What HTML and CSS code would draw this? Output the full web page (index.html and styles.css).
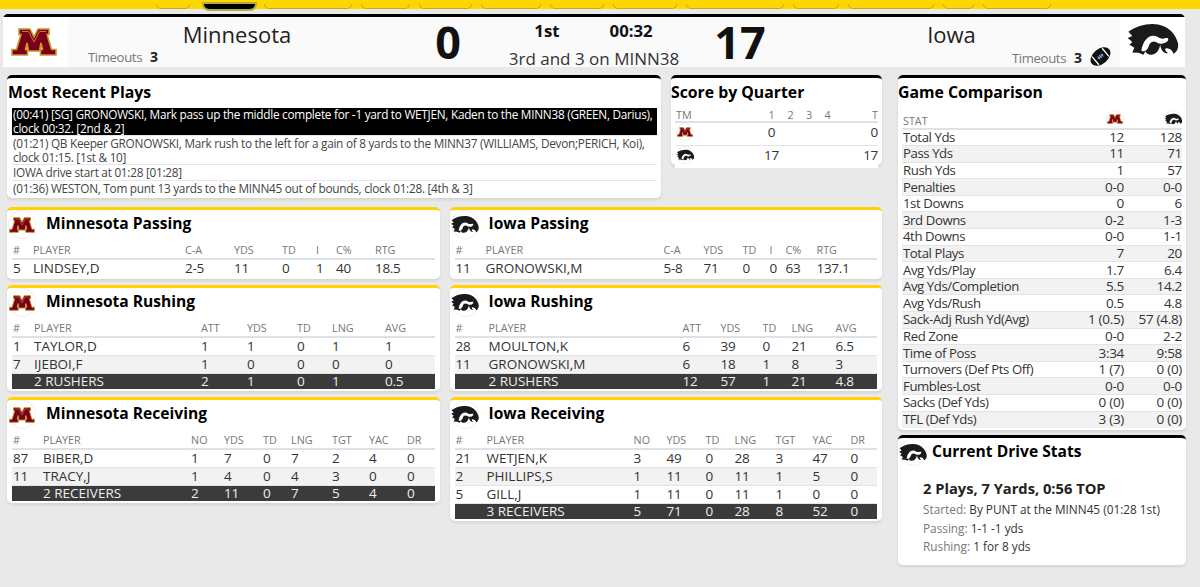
FILE: index.html
```html
<!DOCTYPE html>
<html lang="en">
<head>
<meta charset="utf-8">
<title>Minnesota at Iowa</title>
<link rel="stylesheet" href="styles.css">
</head>
<body>
<svg class="sprite" aria-hidden="true">
  <symbol id="mn" viewBox="0 0 46 28">
    <path d="M8 1H19L23 9L27 1H38V6.500H36L40.500 21.500H45V27H29.500V21.500H31.500L30 15L28.500 23H17.500L16 15L14.500 21.500H16.500V27H1V21.500H5.500L10 6.500H8Z" fill="#7a0019" stroke="#c9962c" stroke-width="1.600"/>
    <path d="M11 3.500H17.500L23 14L28.500 3.500H35" fill="none" stroke="#e0b040" stroke-width=".7"/>
  </symbol>
  <symbol id="hawk" viewBox="140 40 155 100">
    <path d="M147 68C170 50 205 42 232 47C260 52 282 72 289 100C292 114 286 126 276 131C274 121 266 115 254 115C251 122 256 126 262 129C250 131 240 122 238 104C236 120 228 132 212 134C204 134 198 130 196 124L190 134L176 128L158 127L164 114L150 105L158 97L145 86L158 80Z" fill="#1a1a1a"/>
    <path d="M184 122C188 96 202 78 220 79C232 80 238 92 254 86C262 84 264 90 258 96C248 104 236 104 226 97C214 92 208 100 205 110C201 122 192 126 184 122Z" fill="#fff"/>
  </symbol>
  <symbol id="ball" viewBox="0 0 24 24">
    <g transform="rotate(-40 12 12)">
      <ellipse cx="12" cy="12" rx="13" ry="8.500" fill="#111"/>
      <path d="M4.500 6V18M19.500 6V18" stroke="#fff" stroke-width="1.500"/>
      <path d="M8 12H16M9.500 10V14M12 10V14M14.500 10V14" stroke="#9fc0e8" stroke-width="1.100"/>
    </g>
  </symbol>
</svg>

<nav class="topnav">
  <span class="nb nb1"></span><span class="nb nb-active"></span><span class="nb nb3"></span><span class="nb nb4"></span><span class="nb nb5"></span><span class="nb nb6"></span><span class="nb nb7"></span><span class="nb nb8"></span><span class="nb nb9"></span><span class="nb nb10"></span><span class="nb nb11"></span><span class="nb nb12"></span><span class="nb nb13"></span>
</nav>

<header class="scorebar">
  <div class="sb-logo"><svg class="mn-big"><use href="#mn"/></svg></div>
  <div class="team team-l">
    <div class="team-name">Minnesota</div>
    <div class="timeouts">Timeouts <b>3</b></div>
  </div>
  <div class="score score-l">0</div>
  <div class="clock">
    <div class="clock-top"><b>1st</b><b>00:32</b></div>
    <div class="down">3rd and 3 on MINN38</div>
  </div>
  <div class="score score-r">17</div>
  <div class="team team-r">
    <div class="team-name">Iowa</div>
    <div class="timeouts">Timeouts <b>3</b><svg class="ball"><use href="#ball"/></svg></div>
  </div>
  <div class="sb-logo"><svg class="hawk-big"><use href="#hawk"/></svg></div>
</header>

<main class="layout">
  <div class="left">
    <div class="top-row">
      <section class="card plays">
        <h2>Most Recent Plays</h2>
        <ul class="play-list">
          <li class="current">(00:41) [SG] GRONOWSKI, Mark pass up the middle complete for -1 yard to WETJEN, Kaden to the MINN38 (GREEN, Darius), clock 00:32. [2nd &amp; 2]</li>
          <li>(01:21) QB Keeper GRONOWSKI, Mark rush to the left for a gain of 8 yards to the MINN37 (WILLIAMS, Devon;PERICH, Koi), clock 01:15. [1st &amp; 10]</li>
          <li>IOWA drive start at 01:28 [01:28]</li>
          <li>(01:36) WESTON, Tom punt 13 yards to the MINN45 out of bounds, clock 01:28. [4th &amp; 3]</li>
        </ul>
      </section>
      <section class="card quarters">
        <h2>Score by Quarter</h2>
        <table class="tbl t-q">
          <colgroup><col><col><col><col><col><col></colgroup>
          <thead><tr><th>TM</th><th>1</th><th>2</th><th>3</th><th>4</th><th>T</th></tr></thead>
          <tbody>
            <tr><td><span class="mini"><svg class="mini-mn"><use href="#mn"/></svg></span></td><td>0</td><td></td><td></td><td></td><td>0</td></tr>
            <tr><td><span class="mini"><svg class="mini-hk"><use href="#hawk"/></svg></span></td><td>17</td><td></td><td></td><td></td><td>17</td></tr>
          </tbody>
        </table>
      </section>
    </div>
    <div class="stats">
      <div class="stat-col">
        <section class="card gold">
          <h3><span class="badge"><svg class="bd-mn"><use href="#mn"/></svg></span>Minnesota Passing</h3>
          <table class="tbl t-mp"><colgroup><col><col><col><col><col><col><col><col></colgroup>
            <thead><tr><th>#</th><th>PLAYER</th><th>C-A</th><th>YDS</th><th>TD</th><th>I</th><th>C%</th><th>RTG</th></tr></thead>
            <tbody><tr><td>5</td><td>LINDSEY,D</td><td>2-5</td><td>11</td><td>0</td><td>1</td><td>40</td><td>18.5</td></tr></tbody>
          </table>
        </section>
        <section class="card gold">
          <h3><span class="badge"><svg class="bd-mn"><use href="#mn"/></svg></span>Minnesota Rushing</h3>
          <table class="tbl t-mr"><colgroup><col><col><col><col><col><col><col></colgroup>
            <thead><tr><th>#</th><th>PLAYER</th><th>ATT</th><th>YDS</th><th>TD</th><th>LNG</th><th>AVG</th></tr></thead>
            <tbody>
              <tr><td>1</td><td>TAYLOR,D</td><td>1</td><td>1</td><td>0</td><td>1</td><td>1</td></tr>
              <tr><td>7</td><td>IJEBOI,F</td><td>1</td><td>0</td><td>0</td><td>0</td><td>0</td></tr>
              <tr class="total"><td></td><td>2 RUSHERS</td><td>2</td><td>1</td><td>0</td><td>1</td><td>0.5</td></tr>
            </tbody>
          </table>
        </section>
        <section class="card gold">
          <h3><span class="badge"><svg class="bd-mn"><use href="#mn"/></svg></span>Minnesota Receiving</h3>
          <table class="tbl t-mc"><colgroup><col><col><col><col><col><col><col><col><col></colgroup>
            <thead><tr><th>#</th><th>PLAYER</th><th>NO</th><th>YDS</th><th>TD</th><th>LNG</th><th>TGT</th><th>YAC</th><th>DR</th></tr></thead>
            <tbody>
              <tr><td>87</td><td>BIBER,D</td><td>1</td><td>7</td><td>0</td><td>7</td><td>2</td><td>4</td><td>0</td></tr>
              <tr><td>11</td><td>TRACY,J</td><td>1</td><td>4</td><td>0</td><td>4</td><td>3</td><td>0</td><td>0</td></tr>
              <tr class="total"><td></td><td>2 RECEIVERS</td><td>2</td><td>11</td><td>0</td><td>7</td><td>5</td><td>4</td><td>0</td></tr>
            </tbody>
          </table>
        </section>
      </div>
      <div class="stat-col">
        <section class="card gold">
          <h3><span class="badge"><svg class="bd-hk"><use href="#hawk"/></svg></span>Iowa Passing</h3>
          <table class="tbl t-ip"><colgroup><col><col><col><col><col><col><col><col></colgroup>
            <thead><tr><th>#</th><th>PLAYER</th><th>C-A</th><th>YDS</th><th>TD</th><th>I</th><th>C%</th><th>RTG</th></tr></thead>
            <tbody><tr><td>11</td><td>GRONOWSKI,M</td><td>5-8</td><td>71</td><td>0</td><td>0</td><td>63</td><td>137.1</td></tr></tbody>
          </table>
        </section>
        <section class="card gold">
          <h3><span class="badge"><svg class="bd-hk"><use href="#hawk"/></svg></span>Iowa Rushing</h3>
          <table class="tbl t-ir"><colgroup><col><col><col><col><col><col><col></colgroup>
            <thead><tr><th>#</th><th>PLAYER</th><th>ATT</th><th>YDS</th><th>TD</th><th>LNG</th><th>AVG</th></tr></thead>
            <tbody>
              <tr><td>28</td><td>MOULTON,K</td><td>6</td><td>39</td><td>0</td><td>21</td><td>6.5</td></tr>
              <tr><td>11</td><td>GRONOWSKI,M</td><td>6</td><td>18</td><td>1</td><td>8</td><td>3</td></tr>
              <tr class="total"><td></td><td>2 RUSHERS</td><td>12</td><td>57</td><td>1</td><td>21</td><td>4.8</td></tr>
            </tbody>
          </table>
        </section>
        <section class="card gold">
          <h3><span class="badge"><svg class="bd-hk"><use href="#hawk"/></svg></span>Iowa Receiving</h3>
          <table class="tbl t-ic"><colgroup><col><col><col><col><col><col><col><col><col></colgroup>
            <thead><tr><th>#</th><th>PLAYER</th><th>NO</th><th>YDS</th><th>TD</th><th>LNG</th><th>TGT</th><th>YAC</th><th>DR</th></tr></thead>
            <tbody>
              <tr><td>21</td><td>WETJEN,K</td><td>3</td><td>49</td><td>0</td><td>28</td><td>3</td><td>47</td><td>0</td></tr>
              <tr><td>2</td><td>PHILLIPS,S</td><td>1</td><td>11</td><td>0</td><td>11</td><td>1</td><td>5</td><td>0</td></tr>
              <tr><td>5</td><td>GILL,J</td><td>1</td><td>11</td><td>0</td><td>11</td><td>1</td><td>0</td><td>0</td></tr>
              <tr class="total"><td></td><td>3 RECEIVERS</td><td>5</td><td>71</td><td>0</td><td>28</td><td>8</td><td>52</td><td>0</td></tr>
            </tbody>
          </table>
        </section>
      </div>
    </div>
  </div>

  <aside class="right">
    <section class="card compare">
      <h2>Game Comparison</h2>
      <table class="tbl t-gc"><colgroup><col><col><col></colgroup>
        <thead><tr><th>STAT</th><th><span class="mini"><svg class="mini-mn"><use href="#mn"/></svg></span></th><th><span class="mini"><svg class="mini-hk"><use href="#hawk"/></svg></span></th></tr></thead>
        <tbody>
          <tr><td>Total Yds</td><td>12</td><td>128</td></tr>
          <tr><td>Pass Yds</td><td>11</td><td>71</td></tr>
          <tr><td>Rush Yds</td><td>1</td><td>57</td></tr>
          <tr><td>Penalties</td><td>0-0</td><td>0-0</td></tr>
          <tr><td>1st Downs</td><td>0</td><td>6</td></tr>
          <tr><td>3rd Downs</td><td>0-2</td><td>1-3</td></tr>
          <tr><td>4th Downs</td><td>0-0</td><td>1-1</td></tr>
          <tr><td>Total Plays</td><td>7</td><td>20</td></tr>
          <tr><td>Avg Yds/Play</td><td>1.7</td><td>6.4</td></tr>
          <tr><td>Avg Yds/Completion</td><td>5.5</td><td>14.2</td></tr>
          <tr><td>Avg Yds/Rush</td><td>0.5</td><td>4.8</td></tr>
          <tr><td>Sack-Adj Rush Yd(Avg)</td><td>1 (0.5)</td><td>57 (4.8)</td></tr>
          <tr><td>Red Zone</td><td>0-0</td><td>2-2</td></tr>
          <tr><td>Time of Poss</td><td>3:34</td><td>9:58</td></tr>
          <tr><td>Turnovers (Def Pts Off)</td><td>1 (7)</td><td>0 (0)</td></tr>
          <tr><td>Fumbles-Lost</td><td>0-0</td><td>0-0</td></tr>
          <tr><td>Sacks (Def Yds)</td><td>0 (0)</td><td>0 (0)</td></tr>
          <tr><td>TFL (Def Yds)</td><td>3 (3)</td><td>0 (0)</td></tr>
        </tbody>
      </table>
    </section>
    <section class="card drive">
      <h3 class="drive-title"><span class="badge"><svg class="bd-hk"><use href="#hawk"/></svg></span>Current Drive Stats</h3>
      <div class="drive-body">
        <div class="drive-sum">2 Plays, 7 Yards, 0:56 TOP</div>
        <div class="drive-line first"><span>Started:</span> By PUNT at the MINN45 (01:28 1st)</div>
        <div class="drive-line"><span>Passing:</span> 1-1 -1 yds</div>
        <div class="drive-line"><span>Rushing:</span> 1 for 8 yds</div>
      </div>
    </section>
  </aside>
</main>
</body>
</html>
```

FILE: styles.css
```css
* { box-sizing: border-box; }
html, body { margin: 0; padding: 0; }
body {
  background: #e9e9e9;
  color: #2e2e2e;
  font-family: "Open Sans", "Liberation Sans", sans-serif;
  font-size: 13px;
  height: 587px;
  overflow: hidden;
}
.sprite { position: absolute; width: 0; height: 0; }

/* top nav */
.topnav { height: 9px; background: #ffd700; display: flex; align-items: flex-end; }
.nb { display: block; height: 5px; border: 1px solid #c9aa10; border-top: 0; border-radius: 0 0 5px 5px; margin-right: 9px; }
.nb1 { margin-left: 156px; width: 34px; margin-right: 14px; }
.nb-active { width: 51px; background: #000; box-shadow: 0 0 0 2px #b8ad3a; border: 0; margin-right: 9px; }
.nb3 { width: 88px; }
.nb4 { width: 49px; }
.nb5 { width: 53px; }
.nb6 { width: 60px; }
.nb7 { width: 54px; }
.nb8 { width: 64px; }
.nb9 { width: 98px; }
.nb10 { width: 46px; }
.nb11 { width: 86px; }
.nb12 { width: 31px; }
.nb13 { width: 68px; }

/* score bar */
.scorebar {
  margin: 5px 0 0 3px;
  width: 1182px;
  height: 53px;
  display: flex;
  background: #fafafa;
  border-top: 3px solid #000;
  border-radius: 5px 5px 0 0;
}
.sb-logo { width: 65px; background: #fff; display: flex; align-items: center; justify-content: center; }
.mn-big { width: 46px; height: 28px; margin-left: -3px; }
.hawk-big { width: 54px; height: 35px; margin-top: -5px; flex: none; }
.team { width: 352px; }
.team-name { font-size: 22px; line-height: 30px; text-align: center; margin-top: 2px; color: #222; }
.team-l .team-name { margin-left: -14px; }
.team-r .team-name { margin-left: 14px; }
.timeouts { font-size: 13.200px; letter-spacing: -.4px; color: #777; line-height: 16px; display: flex; align-items: center; }
.timeouts b { color: #222; font-size: 14px; margin-left: 8px; letter-spacing: 0; }
.team-l .timeouts { padding-left: 20px; }
.team-r .timeouts { padding-left: 243px; }
.ball { width: 21px; height: 21px; margin: -3px 0 0 8px; flex: none; }
.team-r { width: 351px; margin-left: auto; }
.score { width: 58px; font-size: 45px; font-weight: 700; line-height: 50px; text-align: center; color: #111; }
.score-l { margin-left: -1px; }
.clock { flex: 1; text-align: center; }
.clock-top { display: flex; justify-content: center; gap: 50px; font-size: 16.800px; line-height: 22px; margin-top: 3px; color: #111; margin-left: -1px; }
.down { font-size: 17px; line-height: 24px; margin-top: 5px; color: #333; }

/* layout */
.layout { display: flex; gap: 16px; margin: 8px 0 0 7px; align-items: flex-start; }
.left { width: 875px; }
.right { width: 288px; display: flex; flex-direction: column; gap: 5px; }
.top-row { display: flex; gap: 10px; align-items: flex-start; }
.stats { display: flex; gap: 10px; margin-top: 9px; }
.stat-col { width: 432.500px; display: flex; flex-direction: column; gap: 6px; }

.card {
  background: #fff;
  border-top: 3px solid #000;
  border-radius: 5px;
  box-shadow: 0 2px 3px rgba(0, 0, 0, .09);
}
.gold { border-top-color: #ffd200; padding: 0 5px 2px; }

h2, h3 { margin: 0; color: #000; font-weight: 700; }
h2 { height: 30px; line-height: 28px; padding-left: 1px; font-size: 15.800px; }
h3 { height: 29px; line-height: 27px; display: flex; align-items: flex-start; margin-left: -4px; font-size: 15.600px; }

.badge { width: 28px; height: 29px; border: 1px solid #f0f0f0; border-radius: 50%; margin-right: 10px; display: flex; align-items: center; justify-content: center; flex: none; }
.bd-mn { width: 26px; height: 16px; flex: none; }
.bd-hk { width: 30px; height: 19px; flex: none; }
.mini { width: 18px; height: 18px; border-radius: 50%; border: 1px solid #f0f0f0; display: inline-flex; align-items: center; justify-content: center; vertical-align: middle; }
.mini-mn { width: 16px; height: 10px; flex: none; }
.mini-hk { width: 19px; height: 12px; flex: none; }

/* tables */
.tbl { width: 100%; border-collapse: collapse; table-layout: fixed; }
.tbl th { font-size: 10.800px; font-weight: 400; color: #777; text-align: left; padding: 0 0 0 1px; height: 20px; vertical-align: bottom; line-height: 16px; border-bottom: 2px solid #dee2e6; }
.tbl td { font-size: 13.500px; letter-spacing: -.3px; padding: 0 0 0 1px; height: 18px; line-height: 15px; border-bottom: 1px solid #e4e4e4; white-space: nowrap; color: #333; }
.tbl td:nth-child(2) { letter-spacing: 0; }
.tbl tbody tr:nth-child(even) td { background: #f2f2f2; }
.tbl tbody tr.total td { background: #3b3b3b; color: #eee; border-bottom: 0; height: 16px; }
.tbl tbody tr:last-child td { border-bottom: 0; }

.t-mp col:nth-child(1) { width: 20px; } .t-mp col:nth-child(2) { width: 152px; } .t-mp col:nth-child(3) { width: 49px; } .t-mp col:nth-child(4) { width: 48px; } .t-mp col:nth-child(5) { width: 34px; } .t-mp col:nth-child(6) { width: 20px; } .t-mp col:nth-child(7) { width: 39px; }
.t-ip col:nth-child(1) { width: 30px; } .t-ip col:nth-child(2) { width: 178px; } .t-ip col:nth-child(3) { width: 40px; } .t-ip col:nth-child(4) { width: 39px; } .t-ip col:nth-child(5) { width: 27px; } .t-ip col:nth-child(6) { width: 16px; } .t-ip col:nth-child(7) { width: 31px; }
.t-mr col:nth-child(1) { width: 21px; } .t-mr col:nth-child(2) { width: 167px; } .t-mr col:nth-child(3) { width: 46px; } .t-mr col:nth-child(4) { width: 50px; } .t-mr col:nth-child(5) { width: 35px; } .t-mr col:nth-child(6) { width: 53px; }
.t-ir col:nth-child(1) { width: 33px; } .t-ir col:nth-child(2) { width: 194px; } .t-ir col:nth-child(3) { width: 38px; } .t-ir col:nth-child(4) { width: 42px; } .t-ir col:nth-child(5) { width: 29px; } .t-ir col:nth-child(6) { width: 44px; }
.t-mc col:nth-child(1) { width: 30px; } .t-mc col:nth-child(2) { width: 148px; } .t-mc col:nth-child(3) { width: 33px; } .t-mc col:nth-child(4) { width: 39px; } .t-mc col:nth-child(5) { width: 28px; } .t-mc col:nth-child(6) { width: 41px; } .t-mc col:nth-child(7) { width: 37px; } .t-mc col:nth-child(8) { width: 38px; }
.t-ic col:nth-child(1) { width: 31px; } .t-ic col:nth-child(2) { width: 147px; } .t-ic col:nth-child(3) { width: 33px; } .t-ic col:nth-child(4) { width: 39px; } .t-ic col:nth-child(5) { width: 29px; } .t-ic col:nth-child(6) { width: 41px; } .t-ic col:nth-child(7) { width: 37px; } .t-ic col:nth-child(8) { width: 38px; }

/* plays */
.plays { width: 654px; height: 123px; }
.play-list { list-style: none; margin: 0 4px 0 5px; padding: 0; }
.play-list li { font-size: 11.800px; letter-spacing: -.27px; line-height: 13.500px; color: #444; padding: 0 0 0 1px; border-bottom: 1px solid #e3e6ee; margin-bottom: 1px; }
.play-list li.current { background: #000; color: #fff; }
.play-list li:last-child { border-bottom: 0; }

/* quarters */
.quarters { width: 211px; height: 90px; padding: 0 4px; }
.quarters h2, .compare h2 { margin-left: -4px; padding-left: 0; }
.t-q th { height: 14px; line-height: 13px; vertical-align: top; }
.t-q th:nth-child(n+2), .t-q td:nth-child(n+2) { text-align: center; padding: 0; }
.t-q th:last-child, .t-q td:last-child { text-align: right; }
.tbl.t-q td { height: 22px; padding-bottom: 4px; letter-spacing: -.3px; }
.t-q tbody tr:nth-child(even) td { background: #fff; }
.t-q col:nth-child(1) { width: 87px; } .t-q col:nth-child(2) { width: 19px; } .t-q col:nth-child(3) { width: 19px; } .t-q col:nth-child(4) { width: 18px; } .t-q col:nth-child(5) { width: 19px; }

/* comparison */
.compare { height: 355px; padding: 0 4px; }
.t-gc th { height: 21px; line-height: 15px; }
.t-gc th .mini { display: flex; margin-left: auto; }
.t-gc th:nth-child(n+2), .t-gc td:nth-child(n+2) { text-align: right; }
.tbl.t-gc td { height: 16.600px; line-height: 15px; letter-spacing: -.3px; }
.tbl.t-gc td:first-child { font-size: 13.200px; letter-spacing: -.42px; }
.t-gc col:nth-child(2) { width: 58px; } .t-gc col:nth-child(3) { width: 58px; }

/* drive */
.drive { height: 130px; padding: 0 1px; }
.drive-title { margin-left: 0; height: 28px; }
.drive-title .badge { margin-right: 5px; height: 28px; }
.drive-body { padding: 12px 0 0 24px; }
.drive-sum { font-size: 14.700px; font-weight: 700; color: #222; line-height: 20px; }
.drive-line { font-size: 11.800px; line-height: 18.500px; color: #333; }
.drive-line.first { margin-top: 2px; }
.drive-line span { color: #777; }
```
